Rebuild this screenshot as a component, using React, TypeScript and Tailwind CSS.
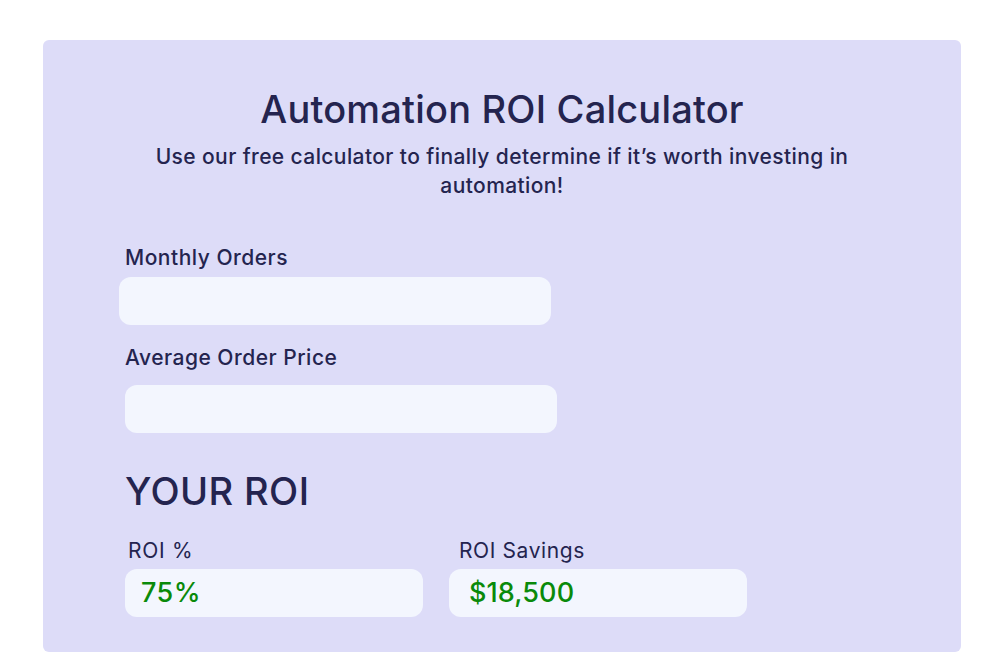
export default function App() {
  return (
    <div className="min-h-[666px] bg-white pt-10 px-[43px] pb-[14px]" style={{ fontFamily: 'Inter, "Open Sans", sans-serif' }}>
      <div className="w-[918px] h-[612px] rounded-md bg-[#dddcf8] text-[#24244f]">
        <div className="pt-[46px] text-center">
          <h1 className="text-[38px] leading-[46px] font-medium tracking-[0.2px]">Automation ROI Calculator</h1>
          <p className="mx-auto mt-[10px] w-[720px] text-[21px] leading-[29px] font-medium tracking-[0.4px]">
            Use our free calculator to finally determine if it’s worth investing in automation!
          </p>
        </div>

        <div className="pl-[76px] pt-[43px]">
          <label className="block pl-[6px] text-[21px] leading-[30px] font-medium tracking-[0.5px]">Monthly Orders</label>
          <input className="mt-[4px] block h-[48px] w-[432px] rounded-xl bg-[#f3f6fe] outline-none" />

          <label className="mt-[18px] block pl-[6px] text-[21px] leading-[30px] font-medium tracking-[0.5px]">Average Order Price</label>
          <input className="ml-[6px] mt-[12px] block h-[48px] w-[432px] rounded-xl bg-[#f3f6fe] outline-none" />

          <h2 className="mt-[36px] pl-[6px] text-[38px] leading-[44px] font-medium tracking-[0.4px]">YOUR ROI</h2>

          <div className="mt-[25px] flex gap-[26px] pl-[6px]">
            <div>
              <div className="pl-[3px] text-[21px] leading-[26px] tracking-[0.7px]">ROI %</div>
              <div className="mt-[5px] flex h-[48px] w-[298px] items-center rounded-xl bg-[#f3f6fe] pl-[16px] text-[27px] font-medium tracking-[0.4px] text-[#0a8a0a]">
                75%
              </div>
            </div>
            <div>
              <div className="pl-[10px] text-[21px] leading-[26px] tracking-[0.6px]">ROI Savings</div>
              <div className="mt-[5px] flex h-[48px] w-[298px] items-center rounded-xl bg-[#f3f6fe] pl-[20px] text-[27px] font-medium tracking-[0.1px] text-[#0a8a0a]">
                $18,500
              </div>
            </div>
          </div>
        </div>
      </div>
    </div>
  );
}
